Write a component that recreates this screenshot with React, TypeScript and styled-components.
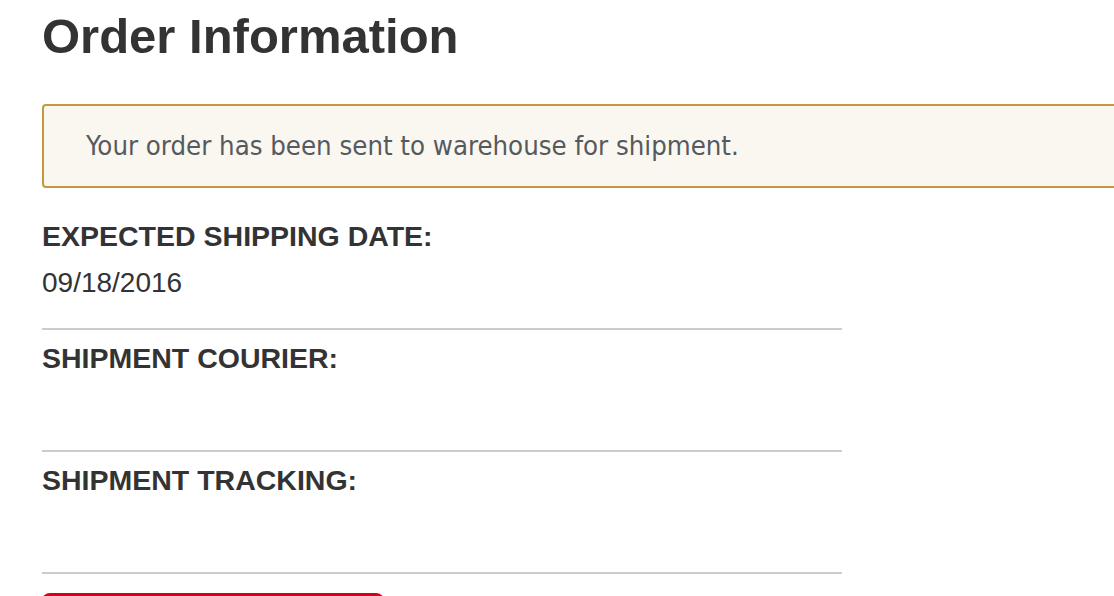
import React from 'react';
import styled, { createGlobalStyle } from 'styled-components';

const GlobalStyle = createGlobalStyle`
  html, body {
    margin: 0;
    background: #ffffff;
    overflow: hidden;
  }
  body {
    font-family: "Liberation Sans", Arial, sans-serif;
    color: #333333;
  }
`;

const Page = styled.div`
  width: 1120px;
  padding-left: 42px;
  box-sizing: border-box;
`;

const Title = styled.h1`
  margin: 8px 0 40px;
  font-size: 49px;
  line-height: 56px;
  font-weight: 700;
  color: #333333;
`;

const Notice = styled.div`
  background-color: #faf7f0;
  border: 2px solid #c49a3c;
  border-radius: 4px;
  padding: 24px 0 24px 42px;
  font-family: "DejaVu Sans", sans-serif;
  font-stretch: condensed;
  font-size: 27.3px;
  line-height: 32px;
  color: #555a5e;
  margin-bottom: 32px;
`;

const Details = styled.div`
  width: 800px;
  display: flex;
  flex-direction: column;
`;

const Field = styled.div<{ $first?: boolean }>`
  display: flex;
  flex-direction: column;
  gap: 14px;
  padding: ${p => (p.$first ? '0' : '12px')} 0 29px;
  border-bottom: 2px solid #cccccc;
`;

const Label = styled.div`
  font-size: 28.5px;
  line-height: 32px;
  font-weight: 700;
  text-transform: uppercase;
  color: #333333;
`;

const Value = styled.div`
  font-size: 28px;
  line-height: 33px;
  min-height: 33px;
  color: #333333;
`;

const ActionButton = styled.button`
  margin-top: 19px;
  width: 342px;
  height: 52px;
  border: none;
  border-radius: 8px;
  background-color: #d0021b;
  color: #ffffff;
  cursor: pointer;
`;

const fields = [
  { label: 'Expected Shipping Date:', value: '09/18/2016' },
  { label: 'Shipment Courier:', value: '' },
  { label: 'Shipment Tracking:', value: '' },
];

export default function App() {
  return (
    <>
      <GlobalStyle />
      <Page>
        <Title>Order Information</Title>
        <Notice>Your order has been sent to warehouse for shipment.</Notice>
        <Details>
          {fields.map((f, i) => (
            <Field key={f.label} $first={i === 0}>
              <Label>{f.label}</Label>
              <Value>{f.value}</Value>
            </Field>
          ))}
          <ActionButton type="button" aria-label="Order action" />
        </Details>
      </Page>
    </>
  );
}
